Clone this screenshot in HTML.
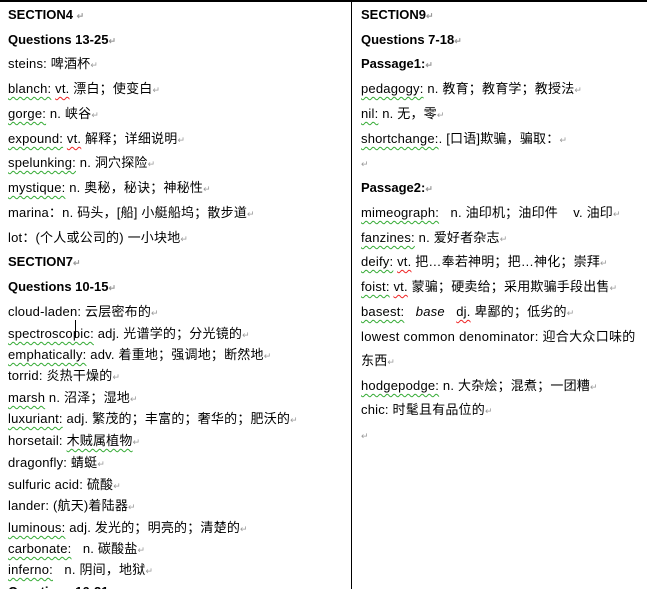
<!DOCTYPE html>
<html><head><meta charset="utf-8"><style>
html,body{margin:0;padding:0;background:#fff;width:647px;height:589px;overflow:hidden;position:relative}
.l{position:absolute;white-space:nowrap;font:13px/16px "Liberation Sans","Noto Sans CJK SC",sans-serif;color:#000;letter-spacing:0.2px}
.b{font-weight:bold;letter-spacing:0}
.m{color:#999;font-size:9px}
.g{text-decoration:underline wavy #3a3;text-decoration-thickness:1px;text-underline-offset:3px}
.r{text-decoration:underline wavy #e22;text-decoration-thickness:1px;text-underline-offset:3px}
</style></head><body>
<div style="position:absolute;left:0;top:0;width:647px;height:2px;background:#000"></div>
<div style="position:absolute;left:351px;top:0;width:1px;height:589px;background:#000"></div>
<div style="position:absolute;left:75px;top:320px;width:1px;height:18px;background:#000"></div>

<div class="l b" style="left:8px;top:7px">SECTION4 <span class="m">↵</span></div>
<div class="l b" style="left:8px;top:32px">Questions 13-25<span class="m">↵</span></div>
<div class="l" style="left:8px;top:56px">steins: 啤酒杯<span class="m">↵</span></div>
<div class="l" style="left:8px;top:81px"><span class="g">blanch:</span> <span class="r">vt.</span> 漂白；使变白<span class="m">↵</span></div>
<div class="l" style="left:8px;top:106px"><span class="g">gorge:</span> n. 峡谷<span class="m">↵</span></div>
<div class="l" style="left:8px;top:131px"><span class="g">expound:</span> <span class="r">vt.</span> 解释；详细说明<span class="m">↵</span></div>
<div class="l" style="left:8px;top:155px"><span class="g">spelunking:</span> n. 洞穴探险<span class="m">↵</span></div>
<div class="l" style="left:8px;top:180px"><span class="g">mystique:</span> n. 奥秘，秘诀；神秘性<span class="m">↵</span></div>
<div class="l" style="left:8px;top:205px">marina：n. 码头，[船] 小艇船坞；散步道<span class="m">↵</span></div>
<div class="l" style="left:8px;top:230px">lot：(个人或公司的) 一小块地<span class="m">↵</span></div>
<div class="l b" style="left:8px;top:254px">SECTION7<span class="m">↵</span></div>
<div class="l b" style="left:8px;top:279px">Questions 10-15<span class="m">↵</span></div>
<div class="l" style="left:8px;top:304px">cloud-laden: 云层密布的<span class="m">↵</span></div>
<div class="l" style="left:8px;top:326px"><span class="g">spectroscopic:</span> adj. 光谱学的；分光镜的<span class="m">↵</span></div>
<div class="l" style="left:8px;top:347px"><span class="g">emphatically:</span> adv. 着重地；强调地；断然地<span class="m">↵</span></div>
<div class="l" style="left:8px;top:368px">torrid: 炎热干燥的<span class="m">↵</span></div>
<div class="l" style="left:8px;top:390px"><span class="g">marsh</span> n. 沼泽；湿地<span class="m">↵</span></div>
<div class="l" style="left:8px;top:411px"><span class="g">luxuriant:</span> adj. 繁茂的；丰富的；奢华的；肥沃的<span class="m">↵</span></div>
<div class="l" style="left:8px;top:433px">horsetail: <span class="g">木贼属植物</span><span class="m">↵</span></div>
<div class="l" style="left:8px;top:455px">dragonfly: 蜻蜓<span class="m">↵</span></div>
<div class="l" style="left:8px;top:477px">sulfuric acid: 硫酸<span class="m">↵</span></div>
<div class="l" style="left:8px;top:498px">lander: (航天)着陆器<span class="m">↵</span></div>
<div class="l" style="left:8px;top:520px"><span class="g">luminous:</span> adj. 发光的；明亮的；清楚的<span class="m">↵</span></div>
<div class="l" style="left:8px;top:541px"><span class="g">carbonate:</span> &nbsp; n. 碳酸盐<span class="m">↵</span></div>
<div class="l" style="left:8px;top:562px"><span class="g">inferno:</span> &nbsp; n. 阴间，地狱<span class="m">↵</span></div>
<div class="l b" style="left:8px;top:584px">Questions 16-21</div>

<div class="l b" style="left:361px;top:7px">SECTION9<span class="m">↵</span></div>
<div class="l b" style="left:361px;top:32px">Questions 7-18<span class="m">↵</span></div>
<div class="l b" style="left:361px;top:56px">Passage1:<span class="m">↵</span></div>
<div class="l" style="left:361px;top:81px"><span class="g">pedagogy:</span> n. 教育；教育学；教授法<span class="m">↵</span></div>
<div class="l" style="left:361px;top:106px"><span class="g">nil:</span> n. 无，零<span class="m">↵</span></div>
<div class="l" style="left:361px;top:131px"><span class="g">shortchange:</span>. [口语]欺骗，骗取：<span class="m">↵</span></div>
<div class="l" style="left:361px;top:155px"><span class="m">↵</span></div>
<div class="l b" style="left:361px;top:180px">Passage2:<span class="m">↵</span></div>
<div class="l" style="left:361px;top:205px"><span class="g">mimeograph:</span> &nbsp; n. 油印机；油印件 &nbsp;&nbsp; v. 油印<span class="m">↵</span></div>
<div class="l" style="left:361px;top:230px"><span class="g">fanzines:</span> n. 爱好者杂志<span class="m">↵</span></div>
<div class="l" style="left:361px;top:254px"><span class="g">deify:</span> <span class="r">vt.</span> 把…奉若神明；把…神化；崇拜<span class="m">↵</span></div>
<div class="l" style="left:361px;top:279px"><span class="g">foist:</span> <span class="r">vt.</span> 蒙骗；硬卖给；采用欺骗手段出售<span class="m">↵</span></div>
<div class="l" style="left:361px;top:304px"><span class="g">basest:</span> &nbsp; <i>base</i> &nbsp; <span class="r">dj.</span> 卑鄙的；低劣的<span class="m">↵</span></div>
<div class="l" style="left:361px;top:329px;letter-spacing:0.3px">lowest common denominator: 迎合大众口味的</div>
<div class="l" style="left:361px;top:353px">东西<span class="m">↵</span></div>
<div class="l" style="left:361px;top:378px"><span class="g">hodgepodge:</span> n. 大杂烩；混煮；一团糟<span class="m">↵</span></div>
<div class="l" style="left:361px;top:402px">chic: 时髦且有品位的<span class="m">↵</span></div>
<div class="l" style="left:361px;top:427px"><span class="m">↵</span></div>
</body></html>
